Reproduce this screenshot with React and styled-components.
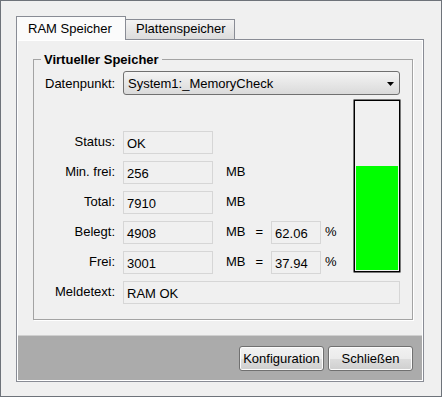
import React from 'react';
import styled, { createGlobalStyle } from 'styled-components';

const GlobalStyle = createGlobalStyle`
  body {
    margin: 0;
    font-family: "Liberation Sans", Arial, sans-serif;
    font-size: 13px;
    color: #000;
  }
`;

const Window = styled.div`
  width: 442px;
  height: 397px;
  box-sizing: border-box;
  border: 1px solid #6e737a;
  background: #f0f0f0;
  padding: 15px 17px 14px 15px;
  display: flex;
  flex-direction: column;
`;

const Tabs = styled.div`
  display: flex;
  align-items: flex-end;
  height: 24px;
  margin-bottom: -1px;
  position: relative;
  z-index: 1;
`;

const Tab = styled.div`
  box-sizing: border-box;
  line-height: 15px;
  white-space: nowrap;
  border: 1px solid #898c95;
  border-bottom: none;
  ${({ $active }) =>
    $active
      ? `
    width: 110px;
    height: 24px;
    padding: 4px 0 0 11px;
    background: #fbfbfb;
  `
      : `
    width: 109px;
    height: 20px;
    margin-bottom: 1px;
    border-left: none;
    padding: 1px 0 0 10px;
    background: linear-gradient(#f3f3f3, #dcdcdc);
  `}
`;

const Panel = styled.div`
  flex: 1;
  display: flex;
  flex-direction: column;
  border: 1px solid #898c95;
  box-shadow: inset 0 0 0 1px #fff;
  padding: 1px;
  background: #f0f0f0;
`;

const Body = styled.div`
  flex: 1;
`;

const Group = styled.fieldset`
  margin: 11px 9px 0 15px;
  padding: 0;
  min-width: 0;
  border: 1px solid #a3a3a3;
  box-shadow: 1px 1px 0 #fff;
`;

const Legend = styled.legend`
  margin-left: 7px;
  padding: 0 3px;
  font-weight: bold;
  line-height: 15px;
`;

const GroupInner = styled.div`
  padding: 4px 12px 15px 11px;
`;

const PointRow = styled.div`
  display: flex;
  align-items: center;
  height: 24px;
  line-height: 15px;
`;

const PointLabel = styled.div`
  width: 78px;
`;

const Select = styled.div`
  flex: 1;
  height: 24px;
  box-sizing: border-box;
  display: flex;
  align-items: center;
  justify-content: space-between;
  padding: 1px 5px 0 4px;
  border: 1px solid #707070;
  border-radius: 3px;
  background: linear-gradient(#f4f4f4, #dadada);
`;

const Main = styled.div`
  display: flex;
  align-items: flex-start;
  margin-top: 5px;
`;

const Rows = styled.div`
  flex: 1;
  display: flex;
  flex-direction: column;
  gap: 7px;
  padding-top: 31px;
`;

const Row = styled.div`
  display: flex;
  align-items: center;
  height: 23px;
  line-height: 15px;
  margin-top: ${({ $gap }) => $gap || 0}px;
`;

const Label = styled.div`
  width: 70px;
  margin-right: 8px;
  text-align: right;
  padding-bottom: 2px;
`;

const Field = styled.div`
  ${({ $width }) => ($width ? `width: ${$width}px;` : 'flex: 1;')}
  margin-left: ${({ $ml }) => $ml || 0}px;
  height: 23px;
  box-sizing: border-box;
  display: flex;
  align-items: center;
  padding: 2px 0 0 3px;
  border: 1px solid #d6d6d6;
  background: #f0f0f0;
`;

const Unit = styled.div`
  margin-left: ${({ $ml }) => $ml || 0}px;
  padding-bottom: 2px;
`;

const Gauge = styled.div`
  width: 46px;
  height: 172px;
  box-sizing: border-box;
  border: 1px solid #000;
  box-shadow: 0 0 0 0.5px #000;
  padding: 1px;
  display: flex;
  flex-direction: column;
  justify-content: flex-end;
`;

const GaugeFill = styled.div`
  background: #00ff00;
`;

const Footer = styled.div`
  height: 45px;
  box-sizing: border-box;
  display: flex;
  justify-content: flex-end;
  align-items: flex-start;
  gap: 4px;
  padding: 10px 9px 0 0;
  border-top: 1px solid #cfcfcf;
  background: #ababab;
`;

const Button = styled.button`
  width: 85px;
  height: 25px;
  padding: 0;
  font-family: inherit;
  font-size: 13px;
  color: #000;
  border: 1px solid #707070;
  border-radius: 3px;
  box-shadow: inset 0 0 0 1px #fcfcfc;
  background: linear-gradient(#f2f2f2 0%, #ebebeb 50%, #dddddd 51%, #cfcfcf 100%);
`;

const rows = [
  { label: 'Min. frei:', value: '256' },
  { label: 'Total:', value: '7910' },
  { label: 'Belegt:', value: '4908', pct: '62.06' },
  { label: 'Frei:', value: '3001', pct: '37.94' },
];

const used = 62.06;

const App = () => {
  return (
    <>
      <GlobalStyle />
      <Window>
        <Tabs>
          <Tab $active>RAM Speicher</Tab>
          <Tab>Plattenspeicher</Tab>
        </Tabs>
        <Panel>
          <Body>
            <Group>
              <Legend>Virtueller Speicher</Legend>
              <GroupInner>
                <PointRow>
                  <PointLabel>Datenpunkt:</PointLabel>
                  <Select>
                    <span>System1:_MemoryCheck</span>
                    <svg width="7" height="4" viewBox="0 0 7 4">
                      <polygon points="0,0 7,0 3.5,4" fill="#000" />
                    </svg>
                  </Select>
                </PointRow>
                <Main>
                  <Rows>
                    <Row>
                      <Label>Status:</Label>
                      <Field $width={90}>OK</Field>
                    </Row>
                    {rows.map((r) => (
                      <Row key={r.label}>
                        <Label>{r.label}</Label>
                        <Field $width={90}>{r.value}</Field>
                        <Unit $ml={13}>MB</Unit>
                        {r.pct && (
                          <>
                            <Unit $ml={10}>=</Unit>
                            <Field $width={50} $ml={8}>{r.pct}</Field>
                            <Unit $ml={4}>%</Unit>
                          </>
                        )}
                      </Row>
                    ))}
                  </Rows>
                  <Gauge>
                    <GaugeFill style={{ height: `${used}%` }} />
                  </Gauge>
                </Main>
                <Row $gap={7}>
                  <Label>Meldetext:</Label>
                  <Field>RAM OK</Field>
                </Row>
              </GroupInner>
            </Group>
          </Body>
          <Footer>
            <Button>Konfiguration</Button>
            <Button>Schließen</Button>
          </Footer>
        </Panel>
      </Window>
    </>
  );
};

export default App;
